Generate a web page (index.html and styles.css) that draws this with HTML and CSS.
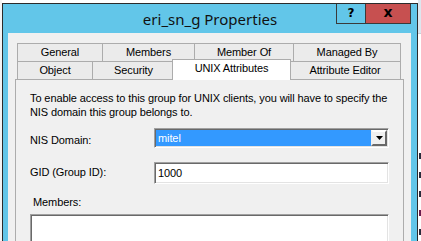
FILE: index.html
```html
<!DOCTYPE html>
<html lang="en">
<head>
    <meta charset="UTF-8">
    <title>eri_sn_g Properties</title>
    <link rel="stylesheet" href="styles.css">
</head>
<body>
    <div class="edge"></div>
    <div class="dialog">
        <div class="titlebar">
            <div></div>
            <div class="title">eri_sn_g Properties</div>
            <div class="caption-btns">
                <div class="cbtn help">?</div>
                <div class="cbtn close">x</div>
            </div>
        </div>
        <div class="client">
            <div class="tabctl">
                <div class="tabrow">
                    <div class="tab" style="width:85px">General</div>
                    <div class="tab" style="width:92px">Members</div>
                    <div class="tab" style="width:99px">Member Of</div>
                    <div class="tab last" style="width:108px">Managed By</div>
                </div>
                <div class="tabrow">
                    <div class="tab" style="width:75px">Object</div>
                    <div class="tab" style="width:82px">Security</div>
                    <div class="tab selected" style="width:119px">UNIX Attributes</div>
                    <div class="tab last" style="width:112px">Attribute Editor</div>
                </div>
                <div class="panel">
                    <p class="intro">To enable access to this group for UNIX clients, you will have to specify the<br>NIS domain this group belongs to.</p>
                    <div class="field nis">
                        <label class="lbl">NIS Domain:</label>
                        <div class="combo">
                            <div class="combo-value">mitel</div>
                            <div class="drop-btn">
                                <svg width="7" height="4" viewBox="0 0 7 4"><path d="M0 0h7L3.5 4z" fill="#000"/></svg>
                            </div>
                        </div>
                    </div>
                    <div class="field gid">
                        <label class="lbl">GID (Group ID):</label>
                        <div class="textbox">1000</div>
                    </div>
                    <div class="members-lbl">Members:</div>
                    <div class="listbox"></div>
                </div>
            </div>
        </div>
    </div>
    <!-- window behind the dialog, only a sliver shows -->
    <div class="behind">
        <div class="behind-head"></div>
        <div class="behind-rows">
            <i class="mark"></i>
            <i class="mark"></i>
            <i class="mark"></i>
            <i class="mark odd"></i>
            <i class="mark"></i>
        </div>
    </div>
</body>
</html>
```

FILE: styles.css
```css
body {
    margin: 0;
    width: 421px;
    height: 241px;
    overflow: hidden;
    display: flex;
    background: #fff;
    font-family: "Liberation Sans", Arial, sans-serif;
    font-size: 11px;
    letter-spacing: -0.1px;
    color: #000;
}

.edge {
    width: 2px;
    background: #f4f4f4;
}

.dialog {
    width: 414px;
    margin-top: 3px;
    border: 1px solid #2b2b2b;
    border-bottom: none;
    background: #62c6e9;
    display: flex;
    flex-direction: column;
}

.titlebar {
    height: 29px;
    display: grid;
    grid-template-columns: 1fr auto 1fr;
}

.title {
    font-family: "Noto Sans", sans-serif;
    font-size: 15px;
    letter-spacing: 0;
    line-height: 30px;
    color: #111;
}

.caption-btns {
    justify-self: end;
    align-self: start;
    display: flex;
    margin-right: 6px;
}

.cbtn {
    height: 19px;
    border: 1px solid #3a3a3a;
    border-top: none;
    font-family: "DejaVu Sans", sans-serif;
    font-weight: bold;
    letter-spacing: 0;
    text-align: center;
    line-height: 18px;
}

.help {
    width: 28px;
    font-size: 12px;
}

.close {
    width: 44px;
    border-left: none;
    background: #c75050;
    font-size: 14px;
    line-height: 17px;
}

.client {
    flex: 1;
    margin: 0 6px 0 5px;
    background: #f0f0f0;
    padding: 10px 0 0 7px;
}

.tabctl {
    width: 389px;
}

.tabrow {
    display: flex;
    padding: 0 2px;
    height: 18px;
}

.tab {
    box-sizing: border-box;
    height: 18px;
    border-top: 1px solid #acacac;
    border-left: 1px solid #acacac;
    background: #ebebeb;
    text-align: center;
    line-height: 17px;
    white-space: nowrap;
}

.tab.last {
    border-right: 1px solid #acacac;
}

.tab.selected {
    position: relative;
    z-index: 1;
    height: 21px;
    margin: -2px -2px 0;
    border-right: 1px solid #acacac;
    background: #fff;
    line-height: 16px;
}

.panel {
    height: 200px;
    border: 1px solid #acacac;
    padding: 11px 14px 0;
    background: #f0f0f0;
}

.intro {
    margin: 0;
    line-height: 14px;
    white-space: nowrap;
}

.field {
    display: flex;
    align-items: flex-start;
}

.nis {
    margin-top: 9px;
}

.gid {
    margin-top: 14px;
}

.lbl {
    width: 124px;
    line-height: 14px;
}

.nis .lbl {
    margin-top: 5px;
}

.gid .lbl {
    margin-top: 3px;
}

.combo,
.textbox,
.listbox {
    border: 1px solid;
    border-color: #a0a0a0 #fff #fff #a0a0a0;
    box-shadow: inset 1px 1px 0 #696969, inset -1px -1px 0 #e3e3e3;
    background: #fff;
}

.combo {
    flex: 1;
    height: 16px;
    padding: 1px;
    display: flex;
}

.combo-value {
    flex: 1;
    background: #3399ff;
    color: #fff;
    line-height: 16px;
    padding-left: 2px;
}

.drop-btn {
    width: 12px;
    height: 12px;
    border: 2px solid;
    border-color: #fff #696969 #696969 #f0f0f0;
    background: #f0f0f0;
    display: flex;
    align-items: center;
    justify-content: center;
}

.textbox {
    flex: 1;
    height: 18px;
    padding: 1px 3px;
    line-height: 18px;
}

.members-lbl {
    margin-top: 11px;
    padding-left: 3px;
    line-height: 14px;
}

.listbox {
    margin-top: 5px;
    height: 60px;
}

.behind {
    width: 3px;
    overflow: hidden;
    background: #fff;
}

.behind-head {
    height: 33px;
    background: #dde6ee;
    border-bottom: 1px solid #c8d0d8;
}

.behind-rows {
    display: flex;
    flex-direction: column;
    gap: 13px;
    padding: 119px 0 0 1px;
}

.mark {
    width: 2px;
    height: 6px;
    background: #2a2a3a;
}

.mark.odd {
    background: #6a1b4d;
}
```
